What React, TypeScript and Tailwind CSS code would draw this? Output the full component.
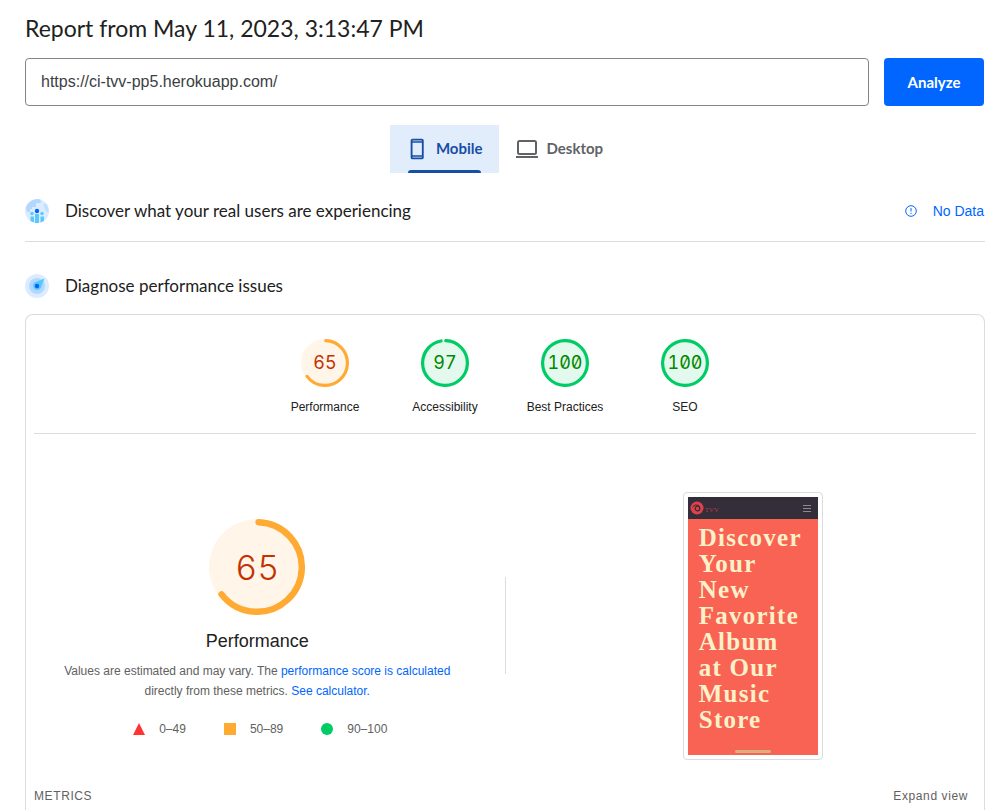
import React from "react";

const arial = "font-['Liberation_Sans',sans-serif]";
const product = "font-['Lato',sans-serif]";

type Tone = "average" | "pass";

const tones: Record<Tone, { stroke: string; fill: string; text: string }> = {
  average: { stroke: "#ffaa33", fill: "#fff5e9", text: "text-[#c33300]" },
  pass: { stroke: "#00cc66", fill: "#e4f9ee", text: "text-[#008800]" },
};

function Gauge({ score, tone, large = false }: { score: number; tone: Tone; large?: boolean }) {
  const width = 8;
  const r = 60 - width / 2;
  const c = 2 * Math.PI * r;
  const arc = score === 100 ? c : (score / 100) * c - width / 2;
  const t = tones[tone];
  return (
    <div className={large ? "relative size-24" : "relative size-12"}>
      <svg viewBox="0 0 120 120" className="size-full" aria-hidden="true">
        <circle cx="60" cy="60" r="60" fill={t.fill} />
        <circle
          cx="60"
          cy="60"
          r={r}
          fill="none"
          stroke={t.stroke}
          strokeWidth={width}
          strokeLinecap="round"
          strokeDasharray={`${arc} ${c}`}
          transform="rotate(-88 60 60)"
        />
      </svg>
      <span
        className={
          "absolute inset-0 flex items-center justify-center font-['Inter',sans-serif] slashed-zero tabular-nums " +
          t.text +
          (large ? " text-[34px] font-light" : " text-lg")
        }
      >
        {score}
      </span>
    </div>
  );
}

const categories: { label: string; score: number; tone: Tone }[] = [
  { label: "Performance", score: 65, tone: "average" },
  { label: "Accessibility", score: 97, tone: "pass" },
  { label: "Best Practices", score: 100, tone: "pass" },
  { label: "SEO", score: 100, tone: "pass" },
];

function UsersIcon() {
  return (
    <svg viewBox="0 0 24 24" className="size-6" aria-hidden="true">
      <circle cx="12" cy="12" r="12" fill="#dcecff" />
      <path d="M1 9A12 12 0 0 1 15.500 .5L16 4h-5v4H7v2H5v3H2z" fill="#b3d7ff" />
      <path d="M18 5l3 -.5A12 12 0 0 1 23.500 14L20 11z" fill="#c3dfff" />
      <path d="M5.500 17.500h3.500v6L5.500 22zM10 15h4v9h-4zM15.500 17.500H19V22l-3.500 1.500z" fill="#5ac8fa" />
      <circle cx="7" cy="14.500" r="1.700" fill="#5ac8fa" />
      <circle cx="17" cy="14.500" r="1.700" fill="#5ac8fa" />
      <circle cx="12" cy="12" r="2.200" fill="#0066ff" />
    </svg>
  );
}

function GaugeIcon() {
  return (
    <svg viewBox="0 0 24 24" className="size-6" aria-hidden="true">
      <circle cx="12" cy="12" r="12" fill="#dcecff" />
      <circle cx="12" cy="12" r="8" fill="#b3d7ff" />
      <path d="M19.500 4.500L15.800 14A4.200 4.200 0 1 1 10 8.200z" fill="#5ac8fa" />
      <circle cx="12" cy="12" r="2.200" fill="#0066ff" />
    </svg>
  );
}

function PhoneIcon() {
  return (
    <svg viewBox="0 0 24 24" className="size-6" fill="none" stroke="currentColor" strokeWidth="2" aria-hidden="true">
      <rect x="6" y="2" width="12" height="20" rx="1" />
      <path d="M6 4.500h12M6 19.500h12" strokeWidth="1.500" />
    </svg>
  );
}

function LaptopIcon() {
  return (
    <svg viewBox="0 0 24 24" className="size-6" fill="none" stroke="currentColor" strokeWidth="2" aria-hidden="true">
      <rect x="3" y="4" width="18" height="13" rx="1.500" />
      <path d="M1 20h22" />
    </svg>
  );
}

function Thumbnail() {
  return (
    <figure className="flex h-[268px] w-[140px] flex-col rounded-sm border border-[#dadce0] p-1">
      <div className="flex h-[22px] shrink-0 items-center bg-[#342d3a] pr-[7px] pl-[2px]">
        <svg viewBox="0 0 14 14" className="size-[14px]" aria-hidden="true">
          <circle cx="7" cy="7" r="6.500" fill="#e2404a" />
          <path d="M2.500 6Q5 2.500 9 4.500" fill="none" stroke="#342d3a" strokeWidth="1" />
          <circle cx="7.500" cy="7.500" r="2.300" fill="none" stroke="#342d3a" strokeWidth="1.300" />
        </svg>
        <span className="mt-1 ml-px flex-1 font-['Liberation_Serif',serif] text-[7px] text-[#b83b46]">TVV</span>
        <svg viewBox="0 0 8 8" className="size-2" stroke="#8d8891" strokeWidth="1" aria-hidden="true">
          <path d="M0 1.500h8M0 4.500h8M0 7.500h8" />
        </svg>
      </div>
      <div className="flex flex-1 flex-col justify-between bg-[#f86354] pt-[6px] pb-[2px] pl-[11px]">
        <p className="font-['Liberation_Serif',serif] text-[25px] leading-[26px] font-bold tracking-wider text-[#fdf1c9]">
          Discover<br />Your<br />New<br />Favorite<br />Album<br />at Our<br />Music<br />Store
        </p>
        <div className="ml-9 h-[3px] w-9 rounded-full bg-[#dfae80]" />
      </div>
    </figure>
  );
}

export default function App() {
  return (
    <main className={"flex min-h-screen flex-col bg-white pr-5 pl-[25px] text-[#212121] " + arial}>
      <h1 className={"pt-3 text-[23px] leading-8 " + product}>Report from May 11, 2023, 3:13:47 PM</h1>

      <form className="mt-[14px] flex gap-[15px] pr-px" onSubmit={(e) => e.preventDefault()}>
        <input
          type="url"
          aria-label="Web page URL"
          defaultValue="https://ci-tvv-pp5.herokuapp.com/"
          className="h-12 min-w-0 flex-1 rounded border border-[#80868b] px-[15px] text-base text-[#3c4043] outline-none"
        />
        <button type="submit" className={"h-12 w-[100px] rounded bg-[#0066ff] text-[15px] font-bold text-white " + product}>
          Analyze
        </button>
      </form>

      <div role="tablist" className={"mt-[19px] flex justify-center text-[15px] font-bold " + product}>
        <button role="tab" aria-selected="true" className="flex h-12 w-[109px] flex-col bg-[#e2edfc] px-4 text-[#174ea6]">
          <span className="flex h-[45px] items-center gap-2 pt-[2px]">
            <PhoneIcon />
            Mobile
          </span>
          <span className="ml-0.5 h-[3px] w-[73px] rounded-t bg-[#174ea6]" />
        </button>
        <button role="tab" aria-selected="false" className="flex h-12 w-[122px] items-center gap-2 pb-px pl-4 text-[#5f6368]">
          <LaptopIcon />
          Desktop
        </button>
      </div>

      <section className="mt-[26px] flex items-center border-b border-[#dadce0] pr-px pb-[18px]">
        <UsersIcon />
        <h2 className={"ml-4 flex-1 text-[17px] leading-6 " + product}>Discover what your real users are experiencing</h2>
        <button className="flex items-center gap-4 text-sm text-[#0066ff]">
          <svg viewBox="0 0 12 12" className="size-3" fill="none" stroke="currentColor" aria-hidden="true">
            <circle cx="6" cy="6" r="5.300" />
            <path d="M6 3v3.500M6 7.800V9" />
          </svg>
          No Data
        </button>
      </section>

      <section className="flex flex-1 flex-col">
        <div className="mt-8 flex items-center">
          <GaugeIcon />
          <h2 className={"ml-4 text-[17px] leading-6 " + product}>Diagnose performance issues</h2>
        </div>

        <div className="mt-4 flex-1 rounded-t-lg border border-b-0 border-[#dadce0] px-2 pt-6">
          <div className="flex justify-center border-b border-[#dadce0] pb-[17px]">
            {categories.map((c) => (
              <a key={c.label} href={"#" + c.label} className="flex w-[120px] flex-col items-center gap-3">
                <Gauge score={c.score} tone={c.tone} />
                <span className="text-xs leading-[17px]">{c.label}</span>
              </a>
            ))}
          </div>

          <div className="mt-[58px] flex">
            <div className="flex flex-1 flex-col items-center pt-[27px] pr-6">
              <Gauge score={65} tone="average" large />
              <h3 className="mt-[14px] text-lg leading-6">Performance</h3>
              <p className="mt-2 w-[400px] text-center text-xs leading-5 text-[#616161]">
                Values are estimated and may vary. The{" "}
                <a href="#score" className="text-[#0066ff]">performance score is calculated</a>
                <br />
                directly from these metrics. <a href="#calculator" className="text-[#0066ff]">See calculator.</a>
              </p>
              <ul className="mt-[18px] flex gap-[38px] pl-1.5 text-xs leading-5 text-[#616161]">
                <li className="flex items-center gap-[14px]">
                  <svg viewBox="0 0 12 12" className="size-3" aria-hidden="true"><path d="M6 0l6 12H0z" fill="#ff3333" /></svg>
                  0–49
                </li>
                <li className="flex items-center gap-[14px]">
                  <span className="size-3 bg-[#ffaa33]" />
                  50–89
                </li>
                <li className="flex items-center gap-[14px]">
                  <span className="size-3 rounded-full bg-[#00cc66]" />
                  90–100
                </li>
              </ul>
            </div>
            <div className="mt-[85px] h-[97px] w-px bg-[#dadce0]" />
            <div className="flex flex-1 justify-center pl-6">
              <Thumbnail />
            </div>
          </div>

          <div className="mt-7 flex justify-between pr-2 pb-2 text-xs leading-4 text-[#616161]">
            <h3 className="tracking-wider">METRICS</h3>
            <button className="tracking-wider">Expand view</button>
          </div>
        </div>
      </section>
    </main>
  );
}
